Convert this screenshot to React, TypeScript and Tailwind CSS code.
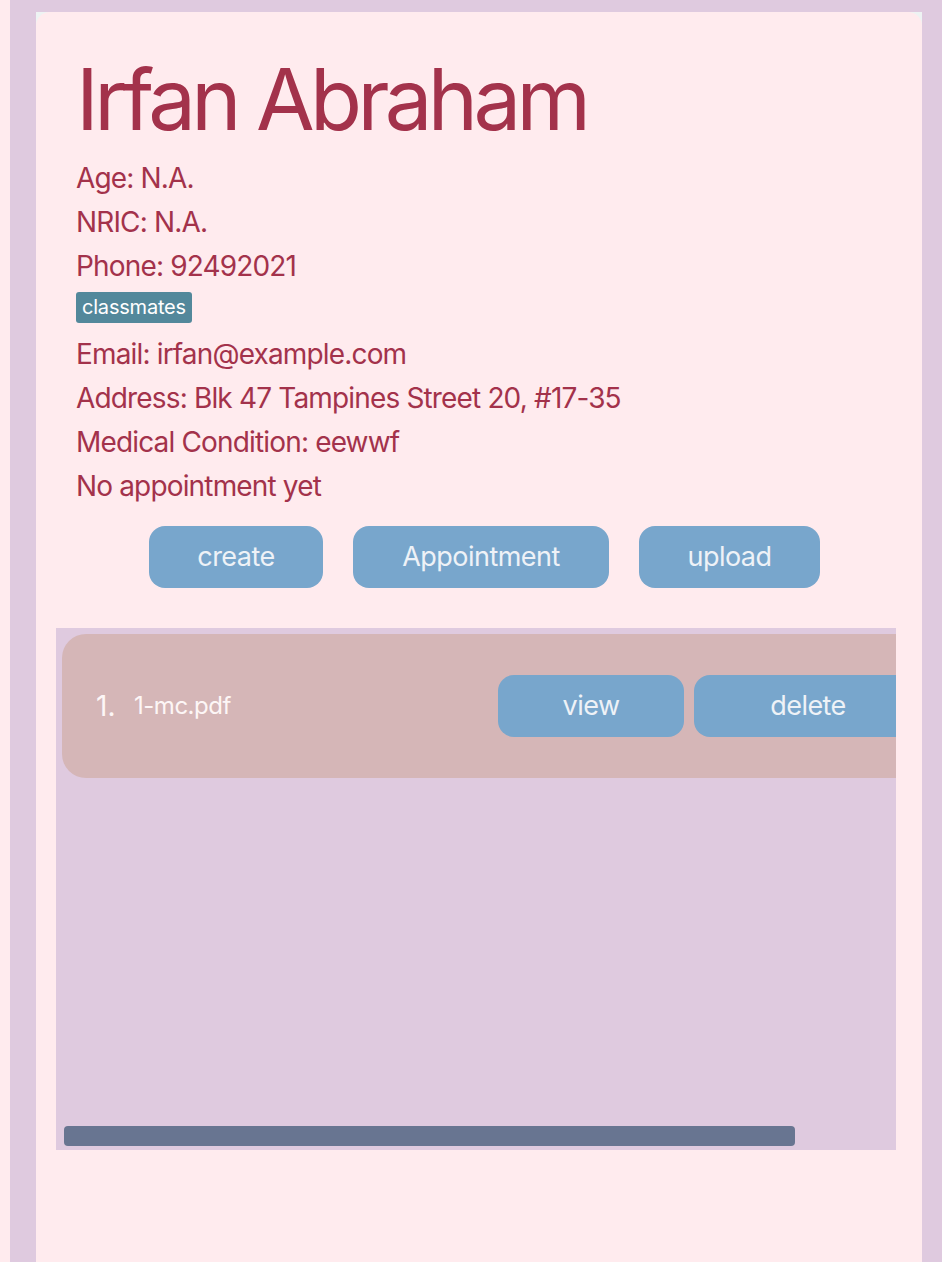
const info = [
  'Age: N.A.',
  'NRIC: N.A.',
  'Phone: 92492021',
];

const more = [
  'Email: irfan@example.com',
  'Address: Blk 47 Tampines Street 20, #17-35',
  'Medical Condition: eewwf',
  'No appointment yet',
];

function Btn({ label, w }: { label: string; w: string }) {
  return (
    <button
      className={`${w} h-[62px] shrink-0 rounded-[16px] bg-[#78a6cc] text-[27px] tracking-[-0.02em] text-[#eef2f7]`}
    >
      {label}
    </button>
  );
}

export default function App() {
  return (
    <div
      className="flex h-[1262px] w-full overflow-hidden bg-[#ffebee] pl-[10px]"
      style={{ fontFamily: 'Inter, "Noto Sans", sans-serif' }}
    >
      <div className="flex min-w-0 flex-1 bg-[#dfcadf] pl-[26px] pr-[20px] pt-[12px]">
        <div className="min-w-0 flex-1 bg-[#eef3f3]">
          <div className="flex h-full min-w-0 flex-col rounded-t-[14px] bg-[#ffebee] pl-[40px] pr-[26px]">
            {/* patient details */}
            <h1 className="mt-[38px] text-[85px] leading-[100px] tracking-[-0.055em] text-[#a3324b]">
              Irfan Abraham
            </h1>
            <div className="mt-[6px] text-[28px] leading-[44px] tracking-[-0.03em] text-[#a3324b]">
              {info.map((t) => (
                <div key={t}>{t}</div>
              ))}
              <div className="flex h-[44px] items-start">
                <span className="mt-[4px] rounded-[3px] bg-[#53889b] px-[6px] text-[20px] leading-[31px] tracking-[-0.01em] text-white">
                  classmates
                </span>
              </div>
              {more.map((t) => (
                <div key={t}>{t}</div>
              ))}
            </div>

            <div className="mt-[18px] flex gap-[30px] pl-[73px]">
              <Btn label="create" w="w-[174px]" />
              <Btn label="Appointment" w="w-[256px]" />
              <Btn label="upload" w="w-[181px]" />
            </div>

            {/* documents list */}
            <div className="-ml-[20px] mt-[40px] flex h-[522px] min-w-0 flex-col justify-between overflow-hidden bg-[#dfcadf] pb-[4px] pl-[6px] pt-[6px]">
              <div className="flex h-[144px] w-[900px] shrink-0 items-center rounded-l-[24px] bg-[#d5b6b7] pl-[34px]">
                <span className="w-[38px] text-[28px] text-[#fdf6f6]">1.</span>
                <span className="w-[364px] text-[24px] tracking-[-0.02em] text-[#fdf6f6]">1-mc.pdf</span>
                <div className="flex gap-[10px]">
                  <Btn label="view" w="w-[186px]" />
                  <Btn label="delete" w="w-[228px]" />
                </div>
              </div>
              <div className="ml-[2px] h-[20px] w-[731px] rounded-[4px] bg-[#687591]" />
            </div>
          </div>
        </div>
      </div>
    </div>
  );
}
